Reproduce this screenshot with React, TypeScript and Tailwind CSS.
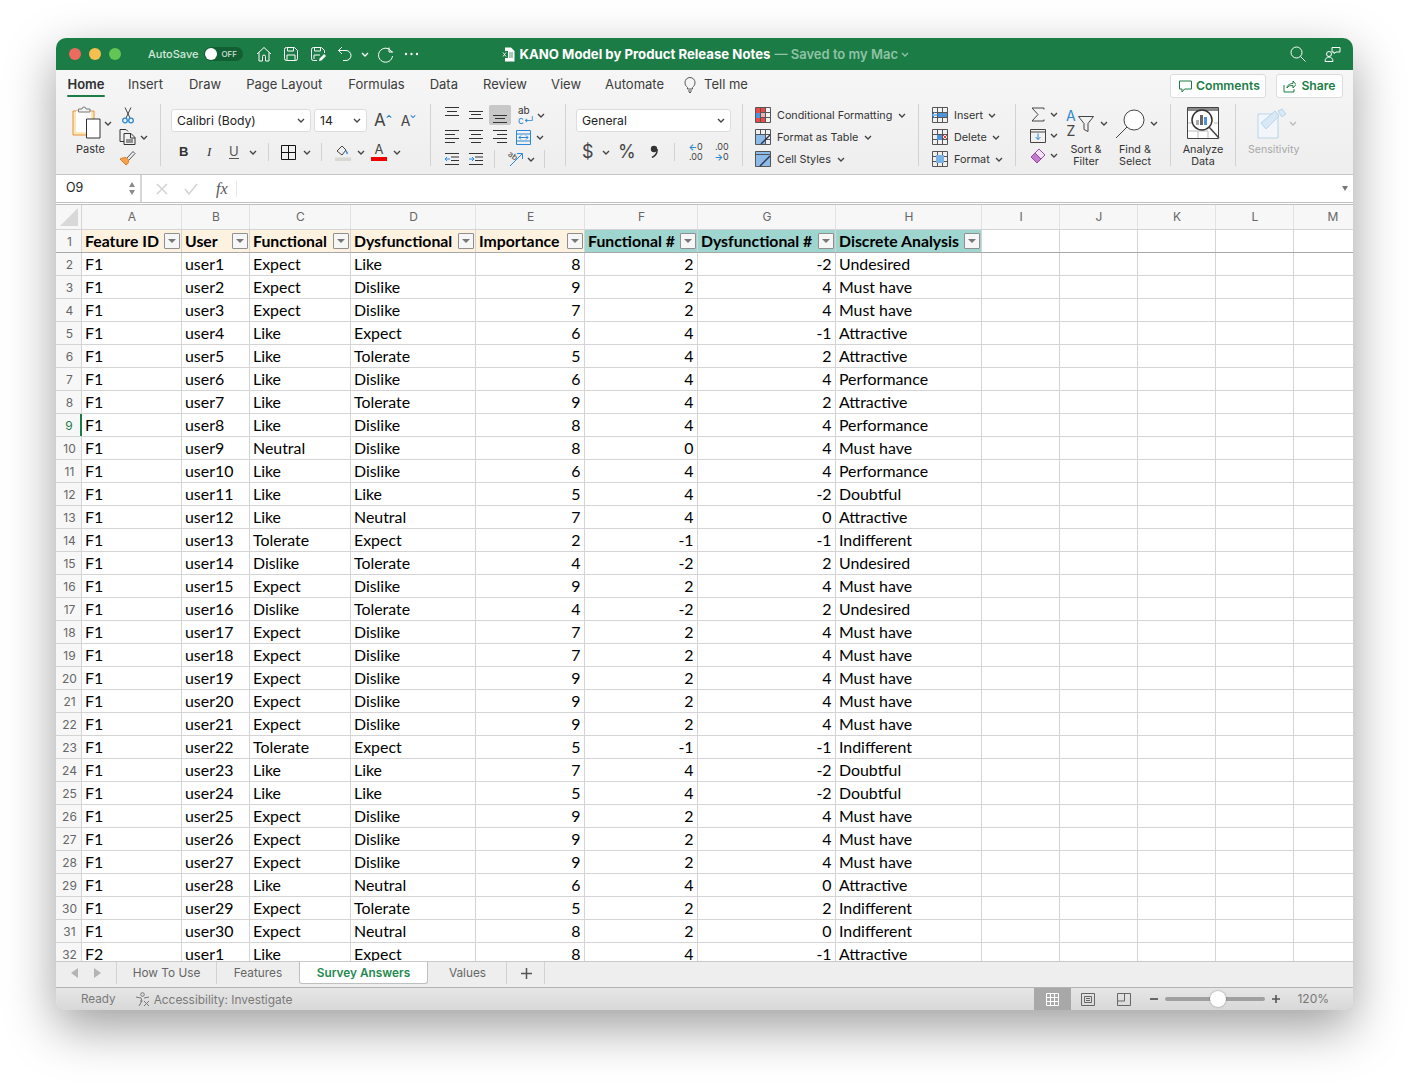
import type { ReactNode } from "react"

const UI = "font-['Inter','Liberation_Sans',sans-serif]"
const SHEET = "font-['Lato','Liberation_Sans',sans-serif]"
const GRID = "grid grid-cols-[26px_100px_68px_101px_125px_109px_113px_138px_146px_78px_78px_78px_78px_78px]"

const columns = ["A", "B", "C", "D", "E", "F", "G", "H", "I", "J", "K", "L", "M"]

const headers = [
  { label: "Feature ID", teal: false },
  { label: "User", teal: false },
  { label: "Functional", teal: false },
  { label: "Dysfunctional", teal: false },
  { label: "Importance", teal: false },
  { label: "Functional #", teal: true },
  { label: "Dysfunctional #", teal: true },
  { label: "Discrete Analysis", teal: true },
]

const data = [
  "F1|user1|Expect|Like|8|2|-2|Undesired",
  "F1|user2|Expect|Dislike|9|2|4|Must have",
  "F1|user3|Expect|Dislike|7|2|4|Must have",
  "F1|user4|Like|Expect|6|4|-1|Attractive",
  "F1|user5|Like|Tolerate|5|4|2|Attractive",
  "F1|user6|Like|Dislike|6|4|4|Performance",
  "F1|user7|Like|Tolerate|9|4|2|Attractive",
  "F1|user8|Like|Dislike|8|4|4|Performance",
  "F1|user9|Neutral|Dislike|8|0|4|Must have",
  "F1|user10|Like|Dislike|6|4|4|Performance",
  "F1|user11|Like|Like|5|4|-2|Doubtful",
  "F1|user12|Like|Neutral|7|4|0|Attractive",
  "F1|user13|Tolerate|Expect|2|-1|-1|Indifferent",
  "F1|user14|Dislike|Tolerate|4|-2|2|Undesired",
  "F1|user15|Expect|Dislike|9|2|4|Must have",
  "F1|user16|Dislike|Tolerate|4|-2|2|Undesired",
  "F1|user17|Expect|Dislike|7|2|4|Must have",
  "F1|user18|Expect|Dislike|7|2|4|Must have",
  "F1|user19|Expect|Dislike|9|2|4|Must have",
  "F1|user20|Expect|Dislike|9|2|4|Must have",
  "F1|user21|Expect|Dislike|9|2|4|Must have",
  "F1|user22|Tolerate|Expect|5|-1|-1|Indifferent",
  "F1|user23|Like|Like|7|4|-2|Doubtful",
  "F1|user24|Like|Like|5|4|-2|Doubtful",
  "F1|user25|Expect|Dislike|9|2|4|Must have",
  "F1|user26|Expect|Dislike|9|2|4|Must have",
  "F1|user27|Expect|Dislike|9|2|4|Must have",
  "F1|user28|Like|Neutral|6|4|0|Attractive",
  "F1|user29|Expect|Tolerate|5|2|2|Indifferent",
  "F1|user30|Expect|Neutral|8|2|0|Indifferent",
  "F2|user1|Like|Expect|8|4|-1|Attractive",
].map((r) => r.split("|"))

function Chev({ className = "" }: { className?: string }) {
  return (
    <svg width="8" height="5" viewBox="0 0 8 5" fill="none" className={`shrink-0 ${className}`}>
      <path d="M1 1l3 3 3-3" stroke="#444" strokeWidth="1.4" />
    </svg>
  )
}

function Sep({ className = "" }: { className?: string }) {
  return <div className={`w-px bg-[#d2d2d2] shrink-0 ${className}`} />
}

function Icon({ w, h, className = "", children }: { w: number; h: number; className?: string; children: ReactNode }) {
  return (
    <svg width={w} height={h} viewBox={`0 0 ${w} ${h}`} fill="none" className={`shrink-0 ${className}`}>
      {children}
    </svg>
  )
}

// horizontal strokes, used by the alignment buttons: [from, to, y]
function Lines({ rows, className = "" }: { rows: number[][]; className?: string }) {
  return (
    <Icon w={16} h={16} className={className}>
      {rows.map((r, i) => (
        <path key={i} d={`M${r[0]} ${r[2]}.5H${r[1]}`} stroke="#333" />
      ))}
    </Icon>
  )
}

function TitleBar() {
  return (
    <div className={`h-[32px] bg-[#1c7c45] flex items-center shrink-0 text-white ${UI}`}>
      <div className="w-3 h-3 rounded-full bg-[#ed6a5e] ml-[13px]" />
      <div className="w-3 h-3 rounded-full bg-[#f5bf4f] ml-2" />
      <div className="w-3 h-3 rounded-full bg-[#62c554] ml-2" />
      <span className="ml-[27px] text-[11px] font-medium text-[#d5e8dc]">AutoSave</span>
      <div className="ml-[6px] w-[39px] h-[14px] rounded-full bg-[#125f34] flex items-center">
        <div className="w-[12px] h-[12px] rounded-full bg-white ml-px" />
        <span className="ml-[4px] text-[8px] font-medium text-[#cfe3d6]">OFF</span>
      </div>
      <Icon w={16} h={16} className="ml-[13px]">
        <path d="M1 8l7-6.5L15 8M3 6.500V15h3.500v-4.500a1.500 1.500 0 013 0V15H13V6.500" stroke="#fff" />
      </Icon>
      <Icon w={16} h={16} className="ml-[11px]">
        <path d="M1.500 3.500a2 2 0 012-2h8l3 3v8a2 2 0 01-2 2h-9a2 2 0 01-2-2zM4.500 1.500v3.500h6V1.500M4 14.500V9h8v5.500" stroke="#fff" />
      </Icon>
      <Icon w={16} h={16} className="ml-[11px]">
        <path d="M7 14.500H3.500a2 2 0 01-2-2v-9a2 2 0 012-2h8l3 3V7M4.500 1.500v3.500h6V1.500M4 13V9h6" stroke="#fff" />
        <path d="M9 15l.6-2.500 4.500-4.500 2 2-4.600 4.500z" fill="#fff" />
      </Icon>
      <Icon w={16} h={16} className="ml-[11px]">
        <path d="M5 1L1.500 4.500 5 8M1.500 4.500H9a5 5 0 010 10H6" stroke="#fff" />
      </Icon>
      <Chev className="ml-[8px] [&_path]:stroke-white" />
      <Icon w={17} h={17} className="ml-[8px]">
        <path d="M15 6.500A7 7 0 1015.500 10M12 1.500V6h4" stroke="#fff" />
      </Icon>
      <Icon w={15} h={4} className="ml-[10px]">
        <circle cx="2" cy="2" r="1.200" fill="#fff" />
        <circle cx="7.500" cy="2" r="1.200" fill="#fff" />
        <circle cx="13" cy="2" r="1.200" fill="#fff" />
      </Icon>
      <Icon w={14} h={15} className="ml-[82px]">
        <path d="M4 .5h6l3.500 3.500v10.500H4z" fill="#fff" />
        <path d="M0 4h7v7H0z" fill="#1c7c45" />
        <path d="M2 5.500l3 4M5 5.500l-3 4" stroke="#fff" strokeWidth=".9" />
        <path d="M8 6h4M8 8h4M8 10h4" stroke="#1c7c45" strokeWidth=".8" />
      </Icon>
      <span className="ml-[4px] mt-px text-[13.2px] font-bold">KANO Model by Product Release Notes</span>
      <span className="ml-[4px] mt-px text-[13px] font-semibold text-[#8fc3a5]">— Saved to my Mac</span>
      <Chev className="ml-[3px] [&_path]:stroke-[#8fc3a5]" />
      <Icon w={16} h={16} className="ml-auto">
        <circle cx="6.500" cy="6.500" r="5.500" stroke="#fff" />
        <path d="M10.500 10.500l5 5" stroke="#fff" />
      </Icon>
      <Icon w={17} h={16} className="ml-[18px] mr-[12px]">
        <circle cx="5" cy="8" r="2.500" stroke="#fff" />
        <path d="M1 15.500c0-6 8-6 8 0zM8 6V1.500h8V6h-4l-2 1.500V6z" stroke="#fff" />
      </Icon>
    </div>
  )
}

function MenuTabs() {
  const items = [
    { label: "Insert", className: "ml-[23px]" },
    { label: "Draw", className: "ml-[26px]" },
    { label: "Page Layout", className: "ml-[25px]" },
    { label: "Formulas", className: "ml-[26px]" },
    { label: "Data", className: "ml-[25px]" },
    { label: "Review", className: "ml-[25px]" },
    { label: "View", className: "ml-[24px]" },
    { label: "Automate", className: "ml-[24px]" },
  ]
  return (
    <div className={`h-[30px] flex items-center text-[13px] text-[#3c3c3c] ${UI}`}>
      <div className="ml-[11px] w-[38px] h-full flex flex-col items-center justify-center relative">
        <span className="font-semibold text-[#2f2f2f]">Home</span>
        <div className="absolute bottom-[3px] left-0 right-0 h-[2px] rounded-full bg-[#1c7c45]" />
      </div>
      {items.map((t) => (
        <span key={t.label} className={t.className}>
          {t.label}
        </span>
      ))}
      <Icon w={12} h={16} className="ml-[20px]">
        <path d="M3.500 10.500C2 9 1 8 1 5.500a5 5 0 0110 0C11 8 10 9 8.500 10.500V12h-5zM4 14h4M5 15.500h2" stroke="#555" />
      </Icon>
      <span className="ml-[8px]">Tell me</span>
      <div className="ml-auto flex items-center gap-[10px] mr-[10px] text-[#1c7c45] font-semibold text-[12.2px]">
        <div className="w-[96px] h-[24px] mt-px pt-px bg-white border border-[#dcdcdc] rounded-[3px] flex items-center pl-[8px] gap-[4px]">
          <Icon w={13} h={13}>
            <path d="M.5 1h12v8H5.500L3 12V9H.5z" stroke="#1c7c45" />
          </Icon>
          Comments
        </div>
        <div className="w-[67px] h-[24px] mt-px pt-px bg-white border border-[#dcdcdc] rounded-[3px] flex items-center justify-center gap-[5px]">
          <Icon w={13} h={13}>
            <path d="M1 5v7h10V9M4 8c0-3 3-4.500 6-4.500V1l3 3.500L10 8V5.500C7 5.500 5 6 4 8z" stroke="#1c7c45" />
          </Icon>
          Share
        </div>
      </div>
    </div>
  )
}

function Select({ label, className }: { label: string; className: string }) {
  return (
    <div className={`h-[23px] bg-white border border-[#dcdcdc] rounded-[3px] flex items-center justify-between px-[5px] text-[#222] text-[12.2px] ${className}`}>
      <span className="mt-px">{label}</span>
      <Chev />
    </div>
  )
}

function Clipboard() {
  return (
    <div className="w-[105px] h-[62px] border-r border-[#d2d2d2] flex shrink-0">
      <div className="ml-[16px] w-[29px] flex flex-col">
        <Icon w={29} h={35} className="mt-[1px]">
          <path d="M1 6h21v24H1z" fill="#fde6b8" stroke="#e8913a" />
          <path d="M4 6h15v21H4z" fill="#fff" />
          <path d="M6.500 7V4H10a2 2 0 014 0h4v3z" fill="#f4f4f4" stroke="#777" />
          <path d="M14.500 14h13.500v19H14.500z" fill="#fff" stroke="#333" />
        </Icon>
        <span className={`mt-[1px] ml-[4px] text-[11px] text-[#333] ${UI}`}>Paste</span>
      </div>
      <Chev className="ml-[3px] mt-[17px]" />
      <div className="ml-[7px] flex flex-col items-start">
        <Icon w={12} h={17} className="mt-[3px] ml-[3px]">
          <path d="M3 .500L8 11M9 .500L4 11" stroke="#444" />
          <circle cx="3" cy="13.500" r="2.300" stroke="#2b88d8" strokeWidth="1.300" />
          <circle cx="9" cy="13.500" r="2.300" stroke="#2b88d8" strokeWidth="1.300" />
        </Icon>
        <div className="flex items-center mt-[5px]">
          <Icon w={17} h={16}>
            <path d="M5 12.500H1V.500h6l2 2M5 4.500h7l4 4v7H5zM11.500 4.500v4.500h4.500M7 11h7M7 13h7" stroke="#333" />
          </Icon>
          <Chev className="ml-[4px]" />
        </div>
        <Icon w={17} h={16} className="mt-[5px]">
          <path d="M1 9l6 6c2-1 3-3 2.500-5L7 7.500C5 7.500 3 8 1 9z" fill="#f7a14e" stroke="#e07a1e" />
          <path d="M8 8l6-6.500 2 2L10 10" stroke="#555" />
        </Icon>
      </div>
    </div>
  )
}

function FontGroup() {
  return (
    <div className={`w-[270px] h-[62px] border-r border-[#d2d2d2] shrink-0 ${UI}`}>
      <div className="flex items-center mt-[5px] ml-[10px]">
        <Select label="Calibri (Body)" className="w-[140px]" />
        <Select label="14" className="w-[53px] ml-[3px]" />
        <span className="ml-[7px] text-[17px] text-[#444] leading-none">A</span>
        <Chev className="w-[6px] -mt-[8px] rotate-180 [&_path]:stroke-[#2b88d8]" />
        <span className="ml-[9px] text-[14px] text-[#444] leading-none">A</span>
        <Chev className="w-[6px] -mt-[8px] [&_path]:stroke-[#2b88d8]" />
      </div>
      <div className="flex items-center mt-[8px] h-[24px] text-[#333]">
        <span className="ml-[18px] w-[9px] text-[13px] font-bold font-['Liberation_Sans']">B</span>
        <span className="ml-[19px] w-[8px] text-[13px] italic font-['Liberation_Serif']">I</span>
        <span className="ml-[14px] w-[10px] text-[13px] border-b border-[#555] leading-[13px] text-[#555]">U</span>
        <Chev className="ml-[10px]" />
        <Sep className="h-[18px] ml-[11px]" />
        <Icon w={15} h={15} className="ml-[12px]">
          <path d="M.5.500h14v14H.5zM7.500.500v14M.5 7.500h14" stroke="#111" />
        </Icon>
        <Chev className="ml-[7px]" />
        <Sep className="h-[18px] ml-[10px]" />
        <Icon w={16} h={17} className="ml-[13px]">
          <path d="M2 7l5-5 4 4-4 5z" stroke="#444" />
          <path d="M11 7c1 1 1.500 2 1 3" stroke="#2b88d8" strokeWidth="1.500" />
          <path d="M0 13.500h16V17H0z" fill="#d8d8d2" />
        </Icon>
        <Chev className="ml-[6px]" />
        <div className="ml-[6px] w-[16px] flex flex-col items-center leading-none">
          <span className="text-[13px] text-[#444] leading-[13px]">A</span>
          <div className="w-[16px] h-[3.500px] bg-[#f00000] mt-px" />
        </div>
        <Chev className="ml-[6px]" />
      </div>
    </div>
  )
}

function AlignGroup() {
  return (
    <div className={`w-[135px] h-[62px] border-r border-[#d2d2d2] shrink-0 pl-[13px] ${UI}`}>
      <div className="flex items-center h-[22px]">
        <Lines rows={[[1, 15, 0], [3, 13, 4], [1, 15, 8]]} />
        <Lines rows={[[1, 15, 4], [3, 13, 7], [1, 15, 11]]} className="ml-[8px]" />
        <div className="ml-[5px] w-[22px] h-[20px] bg-[#c8c8c8] rounded-[2px] flex items-center justify-center">
          <Lines rows={[[1, 15, 8], [3, 13, 11], [1, 15, 15]]} />
        </div>
        <div className="ml-[7px] w-[16px] text-[10px] leading-[10px] text-[#333]">
          ab
          <br />
          <span className="text-[#2b88d8]">c↵</span>
        </div>
        <Chev className="ml-[3px]" />
      </div>
      <div className="flex items-center h-[22px]">
        <Lines rows={[[1, 15, 1], [1, 11, 5], [1, 15, 9], [1, 11, 13]]} />
        <Lines rows={[[1, 15, 1], [3, 13, 5], [1, 15, 9], [3, 13, 13]]} className="ml-[8px]" />
        <Lines rows={[[1, 15, 1], [5, 15, 5], [1, 15, 9], [5, 15, 13]]} className="ml-[8px]" />
        <Icon w={15} h={15} className="ml-[8px]">
          <path d="M.5.500h14v14H.5zM.5 4h14M.5 11h14" stroke="#2b88d8" />
          <path d="M3 7.500h9M5 5.500l-2 2 2 2M10 5.500l2 2-2 2" stroke="#2b88d8" />
        </Icon>
        <Chev className="ml-[5px]" />
      </div>
      <div className="flex items-center h-[18px] mt-[2px]">
        <Icon w={16} h={14}>
          <path d="M7 5h8M7 8.500h8M1 1.500h14M1 12.500h14" stroke="#333" />
          <path d="M6 7H1M3 5L1 7l2 2" stroke="#2b88d8" />
        </Icon>
        <Icon w={16} h={14} className="ml-[8px]">
          <path d="M7 5h8M7 8.500h8M1 12.500h14M1 1.500h14" stroke="#333" />
          <path d="M1 7h5M4 5l2 2-2 2" stroke="#2b88d8" />
        </Icon>
        <Sep className="h-[18px] ml-[10px]" />
        <Icon w={16} h={16} className="ml-[12px] overflow-visible">
          <text x="1" y="7" fontSize="8" fill="#444" transform="rotate(35 5 5)">
            ab
          </text>
          <path d="M3 15L15 3M10 2.500h5.500V8" stroke="#2b88d8" />
        </Icon>
        <Chev className="ml-[4px]" />
        <Sep className="h-[18px] ml-[9px]" />
      </div>
    </div>
  )
}

function NumberGroup() {
  return (
    <div className={`w-[177px] h-[62px] border-r border-[#d2d2d2] shrink-0 pl-[10px] ${UI}`}>
      <Select label="General" className="w-[155px] mt-[5px]" />
      <div className="flex items-center h-[24px] mt-[8px] text-[#444]">
        <span className="ml-[6px] w-[10px] text-[18px] leading-none">$</span>
        <Chev className="ml-[10px]" />
        <span className="ml-[8px] text-[18px] leading-none">%</span>
        <Icon w={10} h={13} className="ml-[13px] -mt-px">
          <circle cx="5" cy="4" r="3.200" fill="#333" />
          <path d="M8 4c.5 4-2 7-5 8.500" stroke="#333" strokeWidth="1.500" />
        </Icon>
        <Sep className="h-[18px] ml-[15px]" />
        <div className="ml-[12px] w-[16px] text-[9px] leading-[10px] text-right whitespace-nowrap">
          <span className="text-[#2b88d8] font-bold">←</span>0
          <br />
          .00
        </div>
        <div className="ml-[10px] w-[16px] text-[9px] leading-[10px] text-right whitespace-nowrap">
          .00
          <br />
          <span className="text-[#2b88d8] font-bold">→</span>0
        </div>
      </div>
    </div>
  )
}

function StyleRow({ label, icon, chev = "ml-[6px]" }: { label: string; icon: ReactNode; chev?: string }) {
  return (
    <div className="flex items-center h-[22px] text-[10.8px] text-[#333]">
      {icon}
      <span className="ml-[6px] mt-[2px] whitespace-nowrap">{label}</span>
      <Chev className={`mt-px ${chev}`} />
    </div>
  )
}

function TableIcon({ children }: { children?: ReactNode }) {
  return (
    <Icon w={16} h={16}>
      <path d="M.5.500h15v15H.5zM.5 5.500h15M.5 10.500h15M5.500.500v15M10.500.500v15" stroke="#555" />
      {children}
    </Icon>
  )
}

function StylesGroup() {
  return (
    <div className={`w-[176px] h-[62px] border-r border-[#d2d2d2] shrink-0 pl-[12px] ${UI}`}>
      <StyleRow
        label="Conditional Formatting"
        icon={
          <TableIcon>
            <path d="M1 1h4v5H1zM6 11h4v4H6zM6 1h4v4H6zM1 11h4v4H1z" fill="#ea4a4a" />
            <path d="M1 6h4v5H1z" fill="#4f94d9" />
            <path d="M6 6h4v4H6z" fill="#f4b0b0" />
          </TableIcon>
        }
      />
      <StyleRow
        label="Format as Table"
        icon={
          <TableIcon>
            <path d="M1 6h9v9H1z" fill="#8dbbe8" />
            <path d="M6 15l9-9" stroke="#335" strokeWidth="1.500" />
          </TableIcon>
        }
      />
      <StyleRow
        label="Cell Styles"
        icon={
          <Icon w={16} h={16}>
            <path d="M.5.500h15v15H.5z" fill="#8dbbe8" stroke="#555" />
            <path d="M.5 3.500h15" stroke="#555" />
            <path d="M5 15l10-10" stroke="#335" strokeWidth="1.500" />
          </Icon>
        }
      />
    </div>
  )
}

function CellsGroup() {
  return (
    <div className={`w-[97px] h-[62px] border-r border-[#d2d2d2] shrink-0 pl-[13px] ${UI}`}>
      <StyleRow
        label="Insert"
        chev="ml-[5px]"
        icon={
          <TableIcon>
            <path d="M6 6h9v4H6z" fill="#4f94d9" />
            <path d="M0 8h7M3 5L0 8l3 3" stroke="#2b88d8" />
          </TableIcon>
        }
      />
      <StyleRow
        label="Delete"
        chev="ml-[5px]"
        icon={
          <TableIcon>
            <path d="M5 6h5v5H5z" fill="#4f94d9" />
            <path d="M11 6l4 4M15 6l-4 4" stroke="#e23b3b" />
          </TableIcon>
        }
      />
      <StyleRow
        label="Format"
        chev="ml-[5px]"
        icon={
          <TableIcon>
            <path d="M4 4h8v8H4z" fill="#7ab2e6" />
          </TableIcon>
        }
      />
    </div>
  )
}

function EditingGroup() {
  return (
    <div className={`w-[155px] h-[62px] border-r border-[#d2d2d2] shrink-0 flex text-[10.8px] leading-[12px] text-[#333] ${UI}`}>
      <div className="ml-[14px] w-[30px] flex flex-col">
        <div className="flex items-center h-[22px]">
          <Icon w={14} h={15} className="ml-[1px]">
            <path d="M13 2.500V1H1l6 6.500L1 14h12v-1.500" stroke="#444" />
          </Icon>
          <Chev className="ml-[5px]" />
        </div>
        <div className="flex items-center h-[22px]">
          <Icon w={16} h={15}>
            <path d="M.5 1.500h15v13H.5zM.5 4h15" stroke="#444" />
            <path d="M8 5.500v6M5.500 9L8 11.500 10.500 9" stroke="#2b88d8" />
          </Icon>
          <Chev className="ml-[4px]" />
        </div>
        <div className="flex items-center h-[22px]">
          <Icon w={16} h={16}>
            <path d="M1 9l8-8 6 6-8 8z" fill="#f3e3f6" stroke="#93479f" />
            <path d="M1 9l4-4 6 6-4 4z" fill="#c47ad2" stroke="#93479f" />
          </Icon>
          <Chev className="ml-[4px]" />
        </div>
      </div>
      <div className="ml-[5px] w-[42px] flex flex-col items-center shrink-0">
        <div className="h-[30px] mt-[4px] flex self-start ml-[1px]">
          <div className="text-[14px] leading-[15px] text-center">
            <div className="text-[#2b88d8]">A</div>
            <div className="text-[#444]">Z</div>
          </div>
          <Icon w={16} h={16} className="ml-[2px] mt-[8px]">
            <path d="M.5.500h15L10 7.500v8l-4-2v-6z" stroke="#444" />
          </Icon>
        </div>
        <span className="mt-[6px] whitespace-nowrap">Sort &amp;</span>
        <span>Filter</span>
      </div>
      <Chev className="-ml-[7px] mt-[17px]" />
      <div className="ml-[7px] w-[40px] flex flex-col items-center shrink-0">
        <Icon w={30} h={30} className="mt-[5px] mb-[5px] self-start">
          <circle cx="19" cy="11" r="10" stroke="#444" fill="#fff" />
          <path d="M12 18L1 29" stroke="#444" />
        </Icon>
        <span className="whitespace-nowrap">Find &amp;</span>
        <span>Select</span>
      </div>
      <Chev className="-ml-[5px] mt-[17px]" />
    </div>
  )
}

function AnalyzeGroup() {
  return (
    <div className={`w-[65px] h-[62px] border-r border-[#d2d2d2] shrink-0 flex flex-col items-center text-[10.8px] leading-[12px] text-[#333] ${UI}`}>
      <Icon w={33} h={33} className="mt-[3px] mb-[4px]">
        <path d="M.5.500h31v31H.5z" fill="#fff" stroke="#444" />
        <path d="M1 1h30v3H1z" fill="#888" />
        <path d="M1 24h20M1 16h5M27 16h4M11 24v7M21 24v7" stroke="#bbb" />
        <circle cx="15" cy="13" r="10" fill="#fff" stroke="#333" strokeWidth="1.500" />
        <path d="M22 20l10 11" stroke="#444" strokeWidth="1.500" />
        <path d="M9 13h3v5H9z" fill="#aaa" />
        <path d="M13 8h3v10h-3z" fill="#666" />
        <path d="M17 10h3v8h-3z" fill="#4f94d9" />
      </Icon>
      <span>Analyze</span>
      <span>Data</span>
    </div>
  )
}

function SensitivityGroup() {
  return (
    <div className={`flex-1 h-[62px] pl-[12px] text-[10.6px] text-[#a8a8a8] ${UI}`}>
      <div className="flex items-center ml-[9px] h-[33px] mt-[3px]">
        <Icon w={30} h={31}>
          <path d="M1 6h20v24H1z" fill="#f2f6fa" stroke="#b8d4ea" />
          <path d="M4 15L18 3l4 5L9 21z" fill="#d8e8f4" stroke="#b8d4ea" />
          <path d="M21 3l4-2 4 5-4 3z" fill="#d8e8f4" stroke="#b8d4ea" />
        </Icon>
        <Chev className="ml-[2px] [&_path]:stroke-[#bbb]" />
      </div>
      <div className="mt-[3px] leading-[14px]">Sensitivity</div>
    </div>
  )
}

function Ribbon() {
  return (
    <div className="h-[74px] flex pt-[4px] shrink-0">
      <Clipboard />
      <FontGroup />
      <AlignGroup />
      <NumberGroup />
      <StylesGroup />
      <CellsGroup />
      <EditingGroup />
      <AnalyzeGroup />
      <SensitivityGroup />
    </div>
  )
}

function FormulaBar() {
  return (
    <div className={`h-[28px] bg-white border-t border-[#c6c6c6] flex items-center shrink-0 ${UI}`}>
      <div className="w-[85px] h-full ml-px border-r-2 border-[#d6d6d6] flex items-center justify-between pl-[9px] pr-[5px] text-[12.5px] text-[#222]">
        O9
        <div className="flex flex-col gap-[3px]">
          <div className="w-0 h-0 border-x-[3.500px] border-x-transparent border-b-[5px] border-b-[#8a8a8a]" />
          <div className="w-0 h-0 border-x-[3.500px] border-x-transparent border-t-[5px] border-t-[#8a8a8a]" />
        </div>
      </div>
      <Icon w={12} h={12} className="ml-[14px]">
        <path d="M1 1l10 10M11 1L1 11" stroke="#d2d2d2" strokeWidth="1.500" />
      </Icon>
      <Icon w={14} h={12} className="ml-[16px]">
        <path d="M1 6l4 5 8-10" stroke="#d2d2d2" strokeWidth="1.500" />
      </Icon>
      <span className="ml-[18px] font-['Liberation_Serif'] italic text-[16px] text-[#555]">fx</span>
      <Sep className="h-[16px] ml-[8px] bg-[#e8e8e8]" />
      <div className="ml-auto mr-[5px] w-0 h-0 border-x-[3.500px] border-x-transparent border-t-[5px] border-t-[#777]" />
    </div>
  )
}

function FilterButton() {
  return (
    <div className="w-[16px] h-[16px] bg-[#f6f6f6] border border-[#8f8f8f] rounded-[1px] flex items-center justify-center shrink-0">
      <div className="w-0 h-0 border-x-[4px] border-x-transparent border-t-[4px] border-t-[#777]" />
    </div>
  )
}

function RowNumber({ n }: { n: number }) {
  const active = n === 9
  return (
    <div
      className={`flex items-center justify-center pt-[2px] pl-[2px] bg-[#f7f7f7] text-[12px] leading-[16px] ${UI} ${active ? "border-r-2 border-[#1c7c45] text-[#1c7c45]" : "border-r border-[#d4d4d4] text-[#666]"}`}
    >
      {n}
    </div>
  )
}

function Sheet() {
  return (
    <div className={`flex-1 min-h-0 overflow-hidden bg-white border-t-[3px] border-double border-[#c0c0c0] ${SHEET}`}>
      {/* Column letters */}
      <div className={`${GRID} h-[25px] bg-[#f7f7f7] border-b border-[#d4d4d4] ${UI}`}>
        <div className="border-r border-[#d4d4d4] flex items-end justify-end pr-[3px] pb-[3px]">
          <div className="w-0 h-0 border-l-[18px] border-l-transparent border-b-[18px] border-b-[#d8d8d8]" />
        </div>
        {columns.map((c) => (
          <div key={c} className="border-r border-[#e2e2e2] flex items-center justify-center pl-px text-[12px] text-[#666]">
            {c}
          </div>
        ))}
      </div>
      {/* Header row */}
      <div className={`${GRID} h-[23px] border-b border-[#a8a8a8]`}>
        <RowNumber n={1} />
        {headers.map((h) => (
          <div
            key={h.label}
            className={`flex items-center justify-between pl-[3px] pr-px text-[15.8px] leading-[18px] font-bold text-black whitespace-nowrap border-r border-[#d4d4d4] ${h.teal ? "bg-[#9fd5cf]" : "bg-[#fdf2e0]"}`}
          >
            {h.label}
            <FilterButton />
          </div>
        ))}
        {columns.slice(8).map((c) => (
          <div key={c} className="border-r border-[#d4d4d4]" />
        ))}
      </div>
      {data.map((row, i) => (
        <div key={i} className={`${GRID} h-[23px] border-b border-[#d4d4d4] text-[15.9px] leading-[18px] text-black`}>
          <RowNumber n={i + 2} />
          {row.map((v, j) => (
            <div
              key={j}
              className={`flex items-center border-r border-[#d4d4d4] whitespace-nowrap ${j >= 4 && j <= 6 ? "justify-end pr-[3.500px]" : "pl-[3px]"}`}
            >
              {v}
            </div>
          ))}
          {columns.slice(8).map((c) => (
            <div key={c} className="border-r border-[#d4d4d4]" />
          ))}
        </div>
      ))}
    </div>
  )
}

function SheetTabs() {
  return (
    <div className={`h-[26px] bg-[#eeeeee] border-t border-[#c8c8c8] flex shrink-0 text-[11.8px] text-[#666] ${UI}`}>
      <div className="flex items-center h-[22px] ml-[15px]">
        <div className="w-0 h-0 border-y-[5px] border-y-transparent border-r-[7px] border-r-[#b4b4b4]" />
        <div className="ml-[16px] w-0 h-0 border-y-[5px] border-y-transparent border-l-[7px] border-l-[#b4b4b4]" />
      </div>
      <div className="ml-[15px] w-[101px] h-[22px] pt-[2px] border-x border-[#d2d2d2] flex items-center justify-center">How To Use</div>
      <div className="w-[82px] h-[22px] pt-[2px] flex items-center justify-center">Features</div>
      <div className="w-[129px] h-[22px] pt-[2px] bg-white border-x border-b border-[#c0c0c0] rounded-b-[3px] flex items-center justify-center font-semibold text-[#1f8a4f]">
        Survey Answers
      </div>
      <div className="w-[79px] h-[22px] pt-[2px] pl-px border-r border-[#d2d2d2] flex items-center justify-center">Values</div>
      <div className="w-[38px] h-[22px] border-r border-[#d2d2d2] flex items-center justify-center pl-px">
        <Icon w={11} h={11}>
          <path d="M5.500 0v11M0 5.500h11" stroke="#555" strokeWidth="1.500" />
        </Icon>
      </div>
    </div>
  )
}

function StatusBar() {
  return (
    <div className={`h-[23px] bg-gradient-to-b from-[#e6e6e6] to-[#d8d8d8] border-t border-[#b4b4b4] flex items-center shrink-0 text-[11.7px] text-[#7a7a7a] ${UI}`}>
      <span className="ml-[25px] mt-px">Ready</span>
      <Icon w={15} h={15} className="ml-[19px]">
        <circle cx="7.500" cy="2.500" r="1.800" stroke="#777" />
        <path d="M1 5l5 1 1 3-3 5M14 5L9 6M5 9h2" stroke="#777" />
        <path d="M9 9l5 5M14 9l-5 5" stroke="#777" />
      </Icon>
      <span className="ml-[4px] mt-px text-[11.9px]">Accessibility: Investigate</span>
      <div className="ml-auto h-full w-[37px] bg-[#a8a8a8] flex items-center justify-center">
        <Icon w={13} h={13}>
          <path d="M.5.500h12v12H.5zM.5 4.500h12M.5 8.500h12M4.500.500v12M8.500.500v12" stroke="#fff" />
        </Icon>
      </div>
      <Icon w={14} h={13} className="ml-[10px]">
        <path d="M.5.500h13v12H.5zM3.500 3.500h7v6h-7zM5 5.500h4M5 7.500h4" stroke="#666" />
      </Icon>
      <Icon w={14} h={13} className="ml-[22px]">
        <path d="M.5.500h13v12H.5zM.5 8h7V.500" stroke="#666" />
      </Icon>
      <div className="ml-[19px] w-[8px] h-[2px] bg-[#666]" />
      <div className="ml-[7px] w-[100px] h-[4px] rounded-full bg-[#a0a0a0] relative">
        <div className="absolute left-[45px] -top-[6px] w-[16px] h-[16px] rounded-full bg-white shadow-[0_0_2px_rgba(0,0,0,0.4)]" />
      </div>
      <Icon w={8} h={8} className="ml-[7px]">
        <path d="M4 0v8M0 4h8" stroke="#555" strokeWidth="1.600" />
      </Icon>
      <span className="ml-[17px] mr-[24px] text-[12px] text-[#777]">120%</span>
    </div>
  )
}

export default function App() {
  return (
    <div className="w-[1409px] h-[1084px] bg-white pt-[38px] pl-[56px] overflow-hidden">
      <div className="w-[1297px] h-[972px] rounded-[10px] overflow-hidden flex flex-col shadow-[0_18px_50px_rgba(0,0,0,0.38)] bg-[#f2f2f2]">
        <TitleBar />
        <div className="bg-gradient-to-b from-[#f6f6f6] to-[#eeeeee] shrink-0">
          <MenuTabs />
          <Ribbon />
        </div>
        <FormulaBar />
        <Sheet />
        <SheetTabs />
        <StatusBar />
      </div>
    </div>
  )
}
